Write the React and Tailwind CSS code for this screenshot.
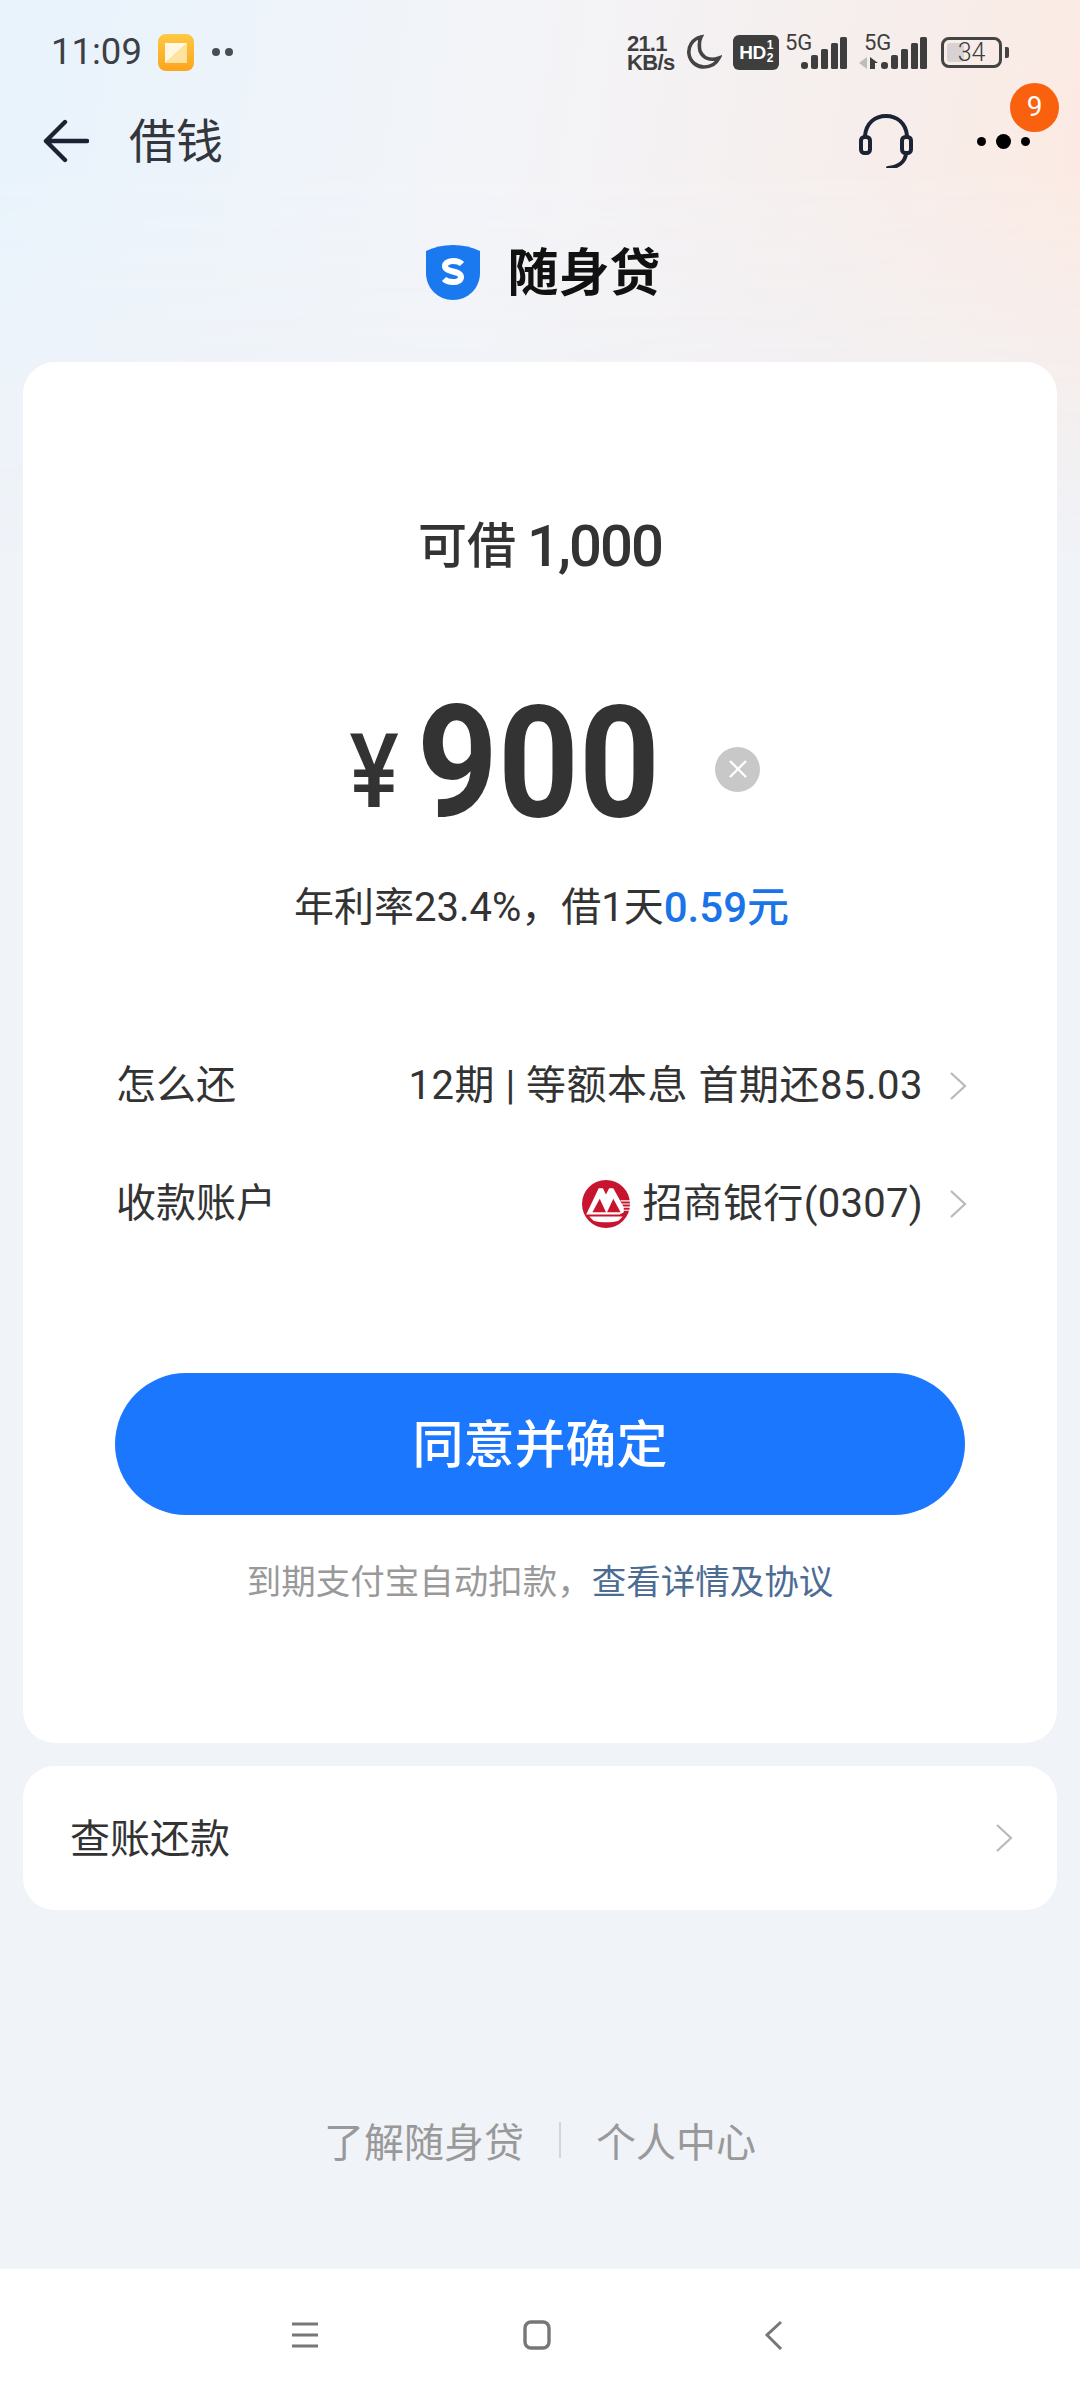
import React from "react";

function Chevron({ className = "" }) {
  return (
    <svg width="18" height="30" viewBox="0 0 18 30" className={className} fill="none" stroke="#b9b9b9" strokeWidth="2.2">
      <path d="M2 2l14 13L2 28" />
    </svg>
  );
}

function Signal() {
  return (
    <svg width="46" height="32" viewBox="0 0 46 32" fill="#3e3e3e">
      <rect x="0" y="25" width="7" height="7" rx="3" />
      <rect x="10" y="18" width="7" height="14" rx="2" />
      <rect x="20" y="12" width="7" height="20" rx="1.5" />
      <rect x="30" y="6" width="7" height="26" rx="1.5" />
      <rect x="39" y="0" width="7" height="32" rx="1.5" />
    </svg>
  );
}

function StatusBar() {
  return (
    <div className="flex items-center justify-between h-[102px] pl-[51px] pr-[71px] pt-[2px] font-['Roboto',sans-serif] text-[#3c3f45]">
      <div className="flex items-center">
        <span className="text-[36.5px] leading-none w-[107px]">11:09</span>
        <svg width="36" height="37" viewBox="0 0 36 37">
          <defs>
            <linearGradient id="ng" x1="0" y1="0" x2="0" y2="1">
              <stop offset="0" stopColor="#fcc943" />
              <stop offset="1" stopColor="#fda41c" />
            </linearGradient>
          </defs>
          <rect width="36" height="37" rx="8" fill="url(#ng)" />
          <path d="M7 29L29 9v20z" fill="#fee2a0" />
          <path d="M7 29V9h22z" fill="#fff7e0" />
        </svg>
        <span className="ml-[18px] flex gap-[5px]">
          <span className="w-[8px] h-[8px] rounded-full bg-[#4a4d52]" />
          <span className="w-[8px] h-[8px] rounded-full bg-[#4a4d52]" />
        </span>
      </div>
      <div className="flex items-center">
        <div className="flex flex-col font-bold text-[#3e3e3e] text-[22px] leading-[19px] font-['Liberation_Sans',sans-serif] w-[48px] mt-[2px]">
          <span className="tracking-[-0.8px]">21.1</span>
          <span className="tracking-[-0.6px] whitespace-nowrap">KB/s</span>
        </div>
        <svg className="ml-[11px]" width="36" height="36" viewBox="0 0 36 36" fill="none" stroke="#444" strokeWidth="3.6">
          <path d="M15 3C6 5 2 13 3 20c1 8 8 13 15 13 7 0 12-3 15-9-9 3-16 0-19-7-1-5-1-10 1-14z" />
        </svg>
        <div className="ml-[11px] w-[46px] h-[35px] bg-[#3e3e3e] rounded-[6px] flex items-center justify-center text-white font-bold text-[19px] leading-none font-['Liberation_Sans',sans-serif] tracking-[-0.5px]">
          <span>HD</span>
          <span className="flex flex-col text-[12px] leading-[13px] ml-[1px]">
            <span>1</span>
            <span>2</span>
          </span>
        </div>
        <div className="relative ml-[6px] w-[62px] h-[36px]">
          <span className="absolute left-0 top-[-2px] text-[#3e3e3e] text-[22px] leading-none">5G</span>
          <span className="absolute right-0 top-[3px]"><Signal /></span>
        </div>
        <div className="relative ml-[12px] w-[68px] h-[36px]">
          <span className="absolute left-[5px] top-[-2px] text-[#3e3e3e] text-[22px] leading-none">5G</span>
          <svg className="absolute left-0 top-[23px]" width="22" height="12" viewBox="0 0 22 12">
            <path d="M8 0v12L0 6z" fill="#bdbdbd" />
            <path d="M11 12V0l8 6h-3v6z" fill="#3e3e3e" />
          </svg>
          <span className="absolute right-0 top-[3px]"><Signal /></span>
        </div>
        <div className="ml-[14px] flex items-center">
          <div className="relative w-[61px] h-[31px] rounded-[8px] border-[3px] border-[#444] flex items-center justify-center overflow-hidden">
            <div className="absolute left-[3px] top-[3px] bottom-[3px] w-[17px] bg-[#d8d3d2] rounded-[3px]" />
            <span className="relative text-[25px] leading-none text-[#3e3e3e] font-light">34</span>
          </div>
          <div className="ml-[3px] w-[4px] h-[11px] rounded-r-[2px] bg-[#444]" />
        </div>
      </div>
    </div>
  );
}

function Header() {
  return (
    <div className="flex items-center h-[78px] pl-[43px] pr-[50px]">
      <svg width="46" height="44" viewBox="0 0 46 44" fill="none" stroke="#1a2233" strokeWidth="4.4" strokeLinecap="round" strokeLinejoin="round">
        <path d="M44 22H3M22 3L3 22l19 19" />
      </svg>
      <span className="ml-[40px] text-[47px] leading-none text-[#33363c] mt-[-7px]">借钱</span>
      <div className="ml-auto flex items-center">
        <svg width="54" height="54" viewBox="0 0 54 54" fill="none" stroke="#1b2335" strokeWidth="4" strokeLinecap="round">
          <path d="M6 22C7 9 16 2 27 2s20 7 21 20" />
          <rect x="2" y="23" width="9" height="16" rx="3.5" />
          <rect x="43" y="23" width="9" height="16" rx="3.5" />
          <path d="M47 40c-1 8-8 13-18 14" />
        </svg>
        <div className="relative ml-[64px] flex items-center gap-[10px]">
          <span className="w-[9px] h-[9px] rounded-full bg-black" />
          <span className="w-[15px] h-[15px] rounded-full bg-black" />
          <span className="w-[9px] h-[9px] rounded-full bg-black" />
          <span className="absolute left-[33px] top-[-51px] w-[49px] h-[49px] rounded-full bg-[#f9610f] text-white flex items-center justify-center font-['Roboto',sans-serif] text-[28px] leading-none">9</span>
        </div>
      </div>
    </div>
  );
}

function Row({ label, children }) {
  return (
    <div className="flex items-center h-[60px] font-['Roboto','Noto_Sans_CJK_SC',sans-serif] text-[40px] leading-none text-[#333]">
      <span>{label}</span>
      <div className="ml-auto flex items-center tracking-[0.3px]">{children}</div>
      <Chevron className="ml-[26px]" />
    </div>
  );
}

function CmbLogo() {
  return (
    <svg width="48" height="48" viewBox="0 0 46 46" className="mr-[12px]">
      <circle cx="23" cy="23" r="23" fill="#c8152f" />
      <path d="M4 33L16 8h4l3 6 3-6h4l10 18v5l-4 2H7z" fill="#fff" />
      <path d="M7 35h32l-4 4c-7 2-17 2-24 0z" fill="#fff" />
      <path d="M10 31l7-13 6 13zM24 31l6-13 7 13z" fill="#c8152f" />
      <path d="M37 20h9M38 23h8M39 26h7M39 29h6" stroke="#fff" strokeWidth="1.1" />
    </svg>
  );
}

export default function App() {
  return (
    <div className="w-[1080px] h-[2400px] flex flex-col overflow-hidden font-['Noto_Sans_CJK_SC',sans-serif] bg-[#f0f3f8] relative">
      <div className="absolute inset-x-0 top-0 h-[560px] bg-[linear-gradient(100deg,#e8f3fc_0%,#f3f4f8_45%,#f6eeec_75%,#fde9e0_100%)] [mask-image:linear-gradient(180deg,#000_0%,#000_30%,transparent_100%)]" />
      <div className="relative flex flex-col flex-1">
        <StatusBar />
        <Header />

        <div className="flex items-center justify-center h-[86px] mt-[49px] ml-[7px]">
          <svg width="54" height="55" viewBox="0 0 54 55">
            <path d="M0 6C8 2 17 0 27 0s19 2 27 6v22c0 15-12 27-27 27S0 43 0 28z" fill="#1a79ee" />
            <path d="M36 19c-2-2-5-3-9-3-4 0-8 2-8 5 0 7 16 4 16 11 0 3-3 5-8 5-4 0-7-1-9-3" fill="none" stroke="#fff" strokeWidth="6" />
          </svg>
          <span className="ml-[27px] text-[51px] leading-none font-bold text-[#111] mt-[-6px]">随身贷</span>
        </div>

        <div className="mx-[23px] mt-[47px] h-[1381px] rounded-[32px] bg-white flex flex-col">
          <div className="mt-[152px] h-[64px] flex items-center justify-center text-[#333] font-['Roboto','Noto_Sans_CJK_SC',sans-serif] font-medium leading-none">
            <span className="text-[49px]">可借</span>
            <span className="ml-[11px] text-[58px] tracking-[-2px]">1,000</span>
          </div>

          <div className="mt-[112px] h-[140px] flex items-center pl-[327px] text-[#333] font-['Roboto',sans-serif] font-bold leading-none">
            <span className="w-[48px] flex justify-center text-[103px] mt-[22px] scale-x-[0.9] font-medium">¥</span>
            <span className="ml-[24px] mt-[6px] w-[233px] flex justify-center text-[155px] scale-x-[0.91]">900</span>
            <span className="ml-[60px] mt-[18px] w-[45px] h-[45px] rounded-full bg-[#c8c8c8] flex items-center justify-center">
              <svg width="20" height="20" viewBox="0 0 20 20" stroke="#fff" strokeWidth="2.4">
                <path d="M2 2l16 16M18 2L2 18" />
              </svg>
            </span>
          </div>

          <div className="mt-[52px] h-[52px] flex items-center justify-center text-[40px] leading-none text-[#333] font-['Roboto','Noto_Sans_CJK_SC',sans-serif] ml-[3px]">
            <span>年利率23.4%，借1天</span>
            <span className="text-[#1a74e8] font-medium text-[42px]">0.59元</span>
          </div>

          <div className="mt-[122px] pl-[93px] pr-[90px] flex flex-col gap-[58px]">
            <Row label="怎么还">
              <span className="tracking-[0.5px]">12期 | 等额本息 首期还85.03</span>
            </Row>
            <Row label="收款账户">
              <CmbLogo />
              <span>招商银行(0307)</span>
            </Row>
          </div>

          <button className="mx-[92px] mt-[139px] h-[142px] pb-[5px] rounded-full bg-[#1a77fe] text-white text-[51px] leading-none font-medium">
            同意并确定
          </button>

          <div className="mt-[42px] flex justify-center text-[34.5px] leading-[44px]">
            <span className="text-[#999]">到期支付宝自动扣款，</span>
            <span className="text-[#4c6c93]">查看详情及协议</span>
          </div>
        </div>

        <div className="mx-[23px] mt-[23px] h-[144px] rounded-[32px] bg-white flex items-center pl-[47px] pr-[44px]">
          <span className="text-[40px] leading-none text-[#333] mt-[-5px]">查账还款</span>
          <Chevron className="ml-auto" />
        </div>

        <div className="mt-[210px] flex items-center justify-center text-[40px] leading-none text-[#999]">
          <span>了解随身贷</span>
          <span className="mx-[35px] w-[2px] h-[36px] bg-[#d6d6d6]" />
          <span>个人中心</span>
        </div>

        <div className="mt-auto h-[131px] bg-white flex items-center pl-[290px]">
          <svg width="30" height="26" viewBox="0 0 30 26" stroke="#777" strokeWidth="3">
            <path d="M2 2h26M2 13h26M2 24h26" />
          </svg>
          <svg className="ml-[203px]" width="28" height="30" viewBox="0 0 28 30" fill="none" stroke="#777" strokeWidth="3.4">
            <rect x="2" y="2" width="24" height="26" rx="6" />
          </svg>
          <svg className="ml-[214px]" width="18" height="30" viewBox="0 0 18 30" fill="none" stroke="#777" strokeWidth="3">
            <path d="M16 2L2 15l14 14" />
          </svg>
        </div>
      </div>
    </div>
  );
}
